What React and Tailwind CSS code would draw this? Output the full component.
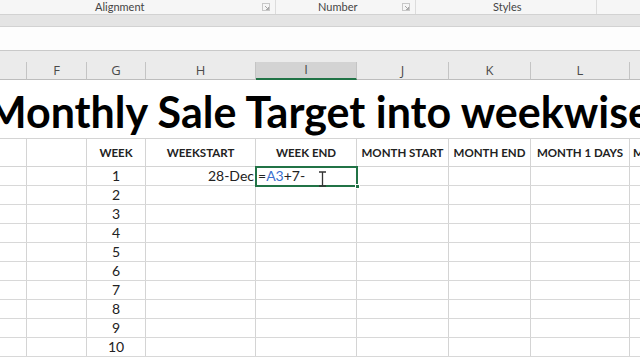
import React from "react";

const W = ["w-[27px]", "w-[60px]", "w-[59px]", "w-[110px]", "w-[101px]", "w-[92px]", "w-[82px]", "w-[99px]", "w-[60px]"];

function Launcher() {
  return (
    <svg width="8" height="8" viewBox="0 0 8 8" className="shrink-0">
      <rect x="0.5" y="0.5" width="7" height="7" fill="none" stroke="#c8c8c8" />
      <path d="M3 3 L6.5 6.5 M6.5 4 V6.5 H4" stroke="#a8a8a8" fill="none" />
    </svg>
  );
}

function Cell({ i, children, className = "" }) {
  return (
    <div className={`${W[i]} shrink-0 h-full border-r border-[#d4d4d4] flex items-end pb-[1px] ${className}`}>
      {children}
    </div>
  );
}

function DataRow({ n, children }) {
  return (
    <div className="flex h-[19px] border-b border-[#d8d8d8] text-[14px] leading-[17px] text-[#222]">
      <Cell i={0} />
      <Cell i={1} />
      <Cell i={2} className="justify-center">{n}</Cell>
      <Cell i={3} className="justify-end pr-[1px]">{children}</Cell>
      <Cell i={4} />
      <Cell i={5} />
      <Cell i={6} />
      <Cell i={7} />
      <Cell i={8} />
    </div>
  );
}

export default function App() {
  const font = { fontFamily: "Lato, 'Open Sans', sans-serif" };
  const headers = ["", "", "WEEK", "WEEKSTART", "WEEK END", "MONTH START", "MONTH END", "MONTH 1 DAYS", "M"];
  const letters = ["", "F", "G", "H", "I", "J", "K", "L", ""];
  return (
    <div className="w-[640px] h-[360px] overflow-hidden bg-white" style={font}>
      {/* ribbon group labels */}
      <div className="h-[14px] bg-[#f6f6f6] flex items-center text-[11px] text-[#444]">
        <div className="w-[276px] h-full border-r border-[#dcdcdc] flex items-center">
          <span className="ml-[95px]">Alignment</span>
          <span className="ml-auto mr-[5px]"><Launcher /></span>
        </div>
        <div className="w-[140px] h-full border-r border-[#dcdcdc] flex items-center">
          <span className="ml-[42px]">Number</span>
          <span className="ml-auto mr-[5px]"><Launcher /></span>
        </div>
        <div className="w-[181px] h-full border-r border-[#dcdcdc] flex items-center">
          <span className="ml-[77px]">Styles</span>
        </div>
      </div>
      {/* band */}
      <div className="h-[13px] bg-[#e4e4e4] border-t border-b border-[#d2d2d2]" />
      {/* formula bar */}
      <div className="h-[24px] bg-[#fdfdfd] border-b border-[#c9c9c9]" />
      {/* column header */}
      <div className="h-[29px] bg-[#ebebeb] flex flex-col">
        <div className="h-[11px]" />
        <div className="flex h-[18px] text-[13px] text-[#4a4a4a]" style={{ fontFamily: "'Open Sans', sans-serif" }}>
          {letters.map((l, i) => (
            <div
              key={i}
              className={`${W[i]} shrink-0 h-full flex items-center justify-center border-r border-[#c4c4c4] ${i === 4 ? "bg-[#d3d3d3] border-b-2 border-b-[#217346]" : "border-b border-b-[#bdbdbd]"}`}
            >
              {l}
            </div>
          ))}
        </div>
      </div>
      {/* title row */}
      <div className="h-[59px] border-b border-[#d4d4d4] overflow-hidden relative">
        <div className="absolute left-[-14px] top-[6px] whitespace-nowrap text-[43px] font-bold text-black leading-[52px]">
          Monthly Sale Target into weekwise
        </div>
      </div>
      {/* header row */}
      <div className="flex h-[28px] border-b border-[#d4d4d4] text-[11.5px] font-bold text-[#222]">
        {headers.map((h, i) => (
          <div key={i} className={`${W[i]} shrink-0 h-full border-r border-[#d4d4d4] flex items-center whitespace-nowrap overflow-hidden ${i === 8 ? "justify-start pl-[3px]" : "justify-center"}`}>
            <span>{h}</span>
          </div>
        ))}
      </div>
      {/* rows */}
      <div className="relative">
        <DataRow n={1}>28-Dec</DataRow>
        {[2, 3, 4, 5, 6, 7, 8, 9, 10].map((n) => (
          <DataRow key={n} n={n} />
        ))}
        {/* selected cell */}
        <div className="absolute left-[255px] top-[-1px] w-[103px] h-[21px] border-2 border-[#217346] flex items-end pb-[1px] pl-[1px] text-[14px] leading-[17px] text-[#222]">
          <span>=</span>
          <span className="text-[#3b6fd0]">A3</span>
          <span>+7-</span>
          <div className="absolute right-[-4px] bottom-[-4px] w-[5px] h-[5px] bg-[#217346] border border-white" />
        </div>
        <svg className="absolute left-[318px] top-[4px]" width="9" height="16" viewBox="0 0 9 16">
          <path d="M1 1 H8 M4.5 1 V15 M1 15 H8" stroke="#333" strokeWidth="1.3" fill="none" />
        </svg>
      </div>
    </div>
  );
}
